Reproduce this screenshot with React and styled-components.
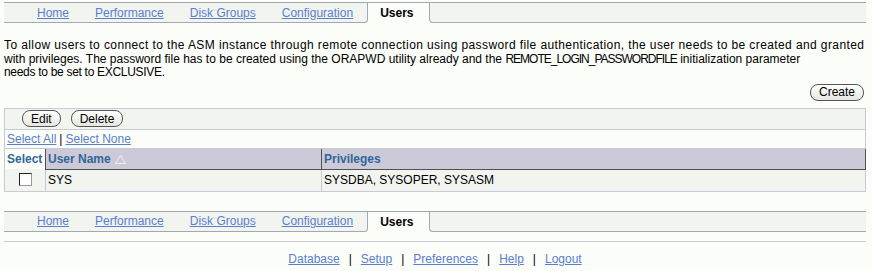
import styled, { createGlobalStyle } from "styled-components";

const GlobalStyle = createGlobalStyle`
  body {
    margin: 0;
    background: #fbfdf9;
    font-family: "Liberation Sans", Arial, sans-serif;
    font-size: 12px;
    color: #000;
  }
`;

const Page = styled.div`
  padding: 2px 6px 0 4px;
`;

const TabBar = styled.div`
  display: flex;
  height: 20px;
  border-top: 1px solid #a3a7ae;
  margin-top: ${(p) => p.$top || 0}px;
`;

const TabFill = styled.div`
  display: flex;
  align-items: center;
  gap: 26px;
  background: #f2f4f0;
  border-bottom: 1px solid #a3a7ae;
  border-${(p) => p.$side}: 1px solid #a3a7ae;
  border-bottom-${(p) => p.$side}-radius: 4px;
  padding: ${(p) => (p.$side === "right" ? "0 14px 0 33px" : "0")};
  flex: ${(p) => (p.$side === "left" ? 1 : "none")};
`;

const ActiveTab = styled.div`
  display: flex;
  align-items: center;
  padding: 0 15px 0 12px;
  font-weight: bold;
`;

const Link = styled.a`
  color: #5a7ece;
  text-decoration: underline;
  cursor: pointer;
`;

const Intro = styled.p`
  margin: 16px 0 0;
  line-height: 13.5px;
  white-space: nowrap;
`;

const IntroLine = styled.span`
  display: block;
  letter-spacing: ${(p) => p.$spacing || 0}px;
`;

const Ident = styled.span`
  letter-spacing: -1px;
`;

const ActionRow = styled.div`
  display: flex;
  justify-content: flex-end;
  margin: 4px 2px 7px 0;
`;

const Button = styled.button`
  font-family: "Liberation Sans", Arial, sans-serif;
  font-size: 12px;
  height: 17px;
  padding: 0 8px;
  border: 1px solid #555;
  border-radius: 8px;
  background: linear-gradient(#ffffff, #e6e6e2);
  color: #000;
  line-height: 14px;
`;

const Table = styled.table`
  width: 100%;
  table-layout: fixed;
  border-collapse: collapse;
  border: 1px solid #c8c8d6;
`;

const BarCell = styled.td`
  height: 20px;
  padding: 0 0 0 17px;
  background: #f2f4f0;
  border-bottom: 1px solid #c8c8d6;
`;

const ButtonGroup = styled.div`
  display: flex;
  gap: 10px;
  align-items: center;
`;

const SelectCell = styled.td`
  height: 18px;
  padding: 0 0 0 2px;
  border-bottom: 1px solid #c8c8d6;
`;

const Sep = styled.span`
  margin: 0 ${(p) => p.$space || 3}px;
  color: #000;
`;

const Th = styled.th`
  height: 20px;
  padding: 0 0 0 2px;
  text-align: left;
  font-weight: bold;
  color: #336699;
  white-space: nowrap;
  background: ${(p) => (p.$plain ? "transparent" : "#cccad8")};
  border-right: 1px solid #505050;
  border-bottom: ${(p) => (p.$plain ? "none" : "1px solid #505050")};
`;

const Td = styled.td`
  height: 21px;
  padding: 0 0 0 2px;
  background: #f2f4f0;
  border-left: 1px solid #c8c8d6;
  text-align: ${(p) => (p.$center ? "center" : "left")};
`;

const Check = styled.span`
  display: inline-block;
  width: 11px;
  height: 11px;
  margin: 3px 1px 0 0;
  background: #fff;
  border: 1px solid #9a9a9a;
  border-top-color: #222;
  border-left-color: #222;
`;

const Rule = styled.div`
  border-top: 1px solid #c8c8d6;
  margin-top: 9px;
`;

const Footer = styled.div`
  display: flex;
  justify-content: center;
  margin-top: 10px;
`;

const tabs = ["Home", "Performance", "Disk Groups", "Configuration"];
const footerLinks = ["Database", "Setup", "Preferences", "Help", "Logout"];

const Tabs = ({ top }) => (
  <TabBar $top={top}>
    <TabFill $side="right">
      {tabs.map((t) => (
        <Link key={t}>{t}</Link>
      ))}
    </TabFill>
    <ActiveTab>Users</ActiveTab>
    <TabFill $side="left" />
  </TabBar>
);

const SortIcon = () => (
  <svg width="11" height="9" viewBox="0 0 11 9" style={{ marginLeft: 4, verticalAlign: "-1px" }}>
    <polygon points="5.5,0.5 10.5,8.5 0.5,8.5" fill="none" stroke="#eef0f4" strokeWidth="1" />
  </svg>
);

export default function App() {
  return (
    <>
      <GlobalStyle />
      <Page>
        <Tabs />
        <Intro>
          <IntroLine $spacing={0.4}>
            To allow users to connect to the ASM instance through remote connection using password file
            authentication, the user needs to be created and granted
          </IntroLine>
          <IntroLine>
            with privileges. The password file has to be created using the ORAPWD utility already and the{" "}
            <Ident>REMOTE_LOGIN_PASSWORDFILE</Ident> initialization parameter
          </IntroLine>
          <IntroLine $spacing={-0.3}>needs to be set to EXCLUSIVE.</IntroLine>
        </Intro>
        <ActionRow>
          <Button>Create</Button>
        </ActionRow>
        <Table>
          <colgroup>
            <col style={{ width: 41 }} />
            <col style={{ width: 276 }} />
            <col />
          </colgroup>
          <tbody>
            <tr>
              <BarCell colSpan={3}>
                <ButtonGroup>
                  <Button>Edit</Button>
                  <Button>Delete</Button>
                </ButtonGroup>
              </BarCell>
            </tr>
            <tr>
              <SelectCell colSpan={3}>
                <Link>Select All</Link>
                <Sep>|</Sep>
                <Link>Select None</Link>
              </SelectCell>
            </tr>
            <tr>
              <Th $plain>Select</Th>
              <Th>
                User Name
                <SortIcon />
              </Th>
              <Th>Privileges</Th>
            </tr>
            <tr>
              <Td $center>
                <Check />
              </Td>
              <Td>SYS</Td>
              <Td>SYSDBA, SYSOPER, SYSASM</Td>
            </tr>
          </tbody>
        </Table>
        <Tabs top={19} />
        <Rule />
        <Footer>
          {footerLinks.map((l, i) => (
            <span key={l}>
              {i > 0 && <Sep $space={9}>|</Sep>}
              <Link>{l}</Link>
            </span>
          ))}
        </Footer>
      </Page>
    </>
  );
}
